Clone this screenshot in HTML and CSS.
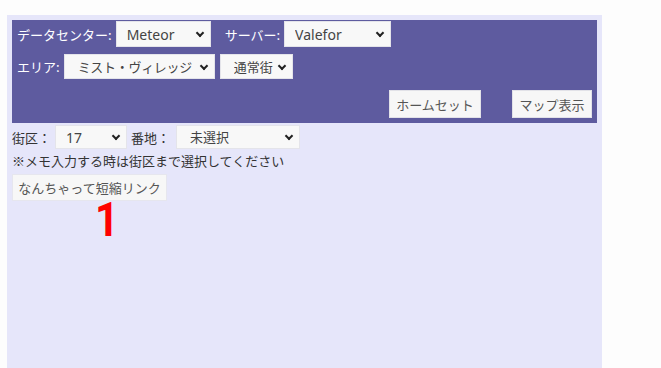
FILE: index.html
```html
<!DOCTYPE html>
<html lang="ja">
<head>
    <meta charset="UTF-8">
    <meta name="viewport" content="width=device-width, initial-scale=1.0">
    <title>ハウジングマップ</title>
    <link rel="stylesheet" href="styles.css">
</head>
<body>
<div class="container">
    <div class="header">
        <div class="row">
            <label class="label">データセンター:</label>
            <span class="sel sel-dc"><select><option>Meteor</option></select></span>
            <label class="label label-server">サーバー:</label>
            <span class="sel sel-server"><select><option>Valefor</option></select></span>
        </div>
        <div class="row row-area">
            <label class="label">エリア:</label>
            <span class="sel sel-area"><select><option>ミスト・ヴィレッジ</option></select></span>
            <span class="sel sel-type"><select><option>通常街</option></select></span>
        </div>
        <div class="actions">
            <button class="btn btn-home">ホームセット</button>
            <button class="btn btn-map">マップ表示</button>
        </div>
    </div>

    <div class="row row-ward">
        <label class="label-dark">街区：</label>
        <span class="sel sel-small sel-ward"><select><option>17</option></select></span>
        <label class="label-dark label-plot">番地：</label>
        <span class="sel sel-small sel-plot"><select><option>未選択</option></select></span>
    </div>
    <p class="note">※メモ入力する時は街区まで選択してください</p>
    <button class="btn btn-link">なんちゃって短縮リンク</button>

    <div class="marker">1</div>
</div>
</body>
</html>
```

FILE: styles.css
```css
body {
    margin: 0;
    font-family: "Noto Sans CJK JP", sans-serif;
    font-size: 13px;
    color: #333;
    background: #fdfdfd;
}

.container {
    position: relative;
    margin: 15px 0 0 7px;
    width: 585px;
    height: 353px;
    padding: 5px;
    background-color: #e6e6fa;
}

.header {
    background-color: #5e5b9f;
    padding: 1px 5px 5px 5px;
}

.row {
    display: flex;
    align-items: center;
}

.row-area {
    margin-top: 7px;
}

.label {
    color: #fff;
    margin-right: 4px;
    white-space: nowrap;
}

.label-server {
    margin-left: 14px;
}

.sel {
    position: relative;
    display: inline-block;
    height: 26px;
}

.sel select {
    appearance: none;
    -webkit-appearance: none;
    box-sizing: border-box;
    width: 100%;
    height: 100%;
    border: 1px solid #e4e4ea;
    background-color: #f8f8f8;
    color: #444;
    font-family: "Noto Sans", "Noto Sans CJK JP", sans-serif;
    font-size: 14px;
    padding: 0 0 0 10px;
    outline: none;
}

.sel::after {
    content: "";
    position: absolute;
    right: 8px;
    top: 50%;
    width: 4px;
    height: 4px;
    margin-top: -4px;
    border-right: 2px solid #222;
    border-bottom: 2px solid #222;
    transform: rotate(45deg);
    pointer-events: none;
}

.sel-dc { width: 95px; }
.sel-server { width: 107px; }
.sel-area { width: 151px; height: 25px; }
.sel-type { width: 73px; height: 25px; margin-left: 5px; }
.sel-area select,
.sel-type select,
.sel-plot select {
    font-size: 13px;
    padding-left: 13px;
}
.sel-area select { letter-spacing: -0.3px; }

.actions {
    display: flex;
    justify-content: flex-end;
    gap: 31px;
    margin-top: 11px;
}

.btn {
    font-family: "Noto Sans CJK JP", sans-serif;
    font-size: 13px;
    color: #555;
    background-color: #f7f7f7;
    border: 1px solid #e2e2e8;
    height: 28px;
    padding: 0;
    white-space: nowrap;
    cursor: pointer;
}

.btn-home { width: 92px; }
.btn-map { width: 80px; }

.row-ward {
    margin-top: 2px;
}

.label-dark {
    width: 43px;
    white-space: nowrap;
}

.label-plot {
    margin-left: 4px;
    width: 45px;
}

.sel-small { height: 24px; }
.sel-ward { width: 72px; }
.sel-plot { width: 124px; }

.note {
    margin: 1px 0 0 0;
    line-height: 22px;
}

.btn-link {
    display: block;
    margin-top: 2px;
    width: 155px;
    height: 27px;
    border-color: #e6e6ee;
}

.marker {
    position: absolute;
    left: 86px;
    top: 201px;
    font-family: Roboto, sans-serif;
    font-weight: bold;
    font-size: 49px;
    line-height: 7px;
    height: 7px;
    color: #f00;
    transform: scaleX(0.85);
}
```
